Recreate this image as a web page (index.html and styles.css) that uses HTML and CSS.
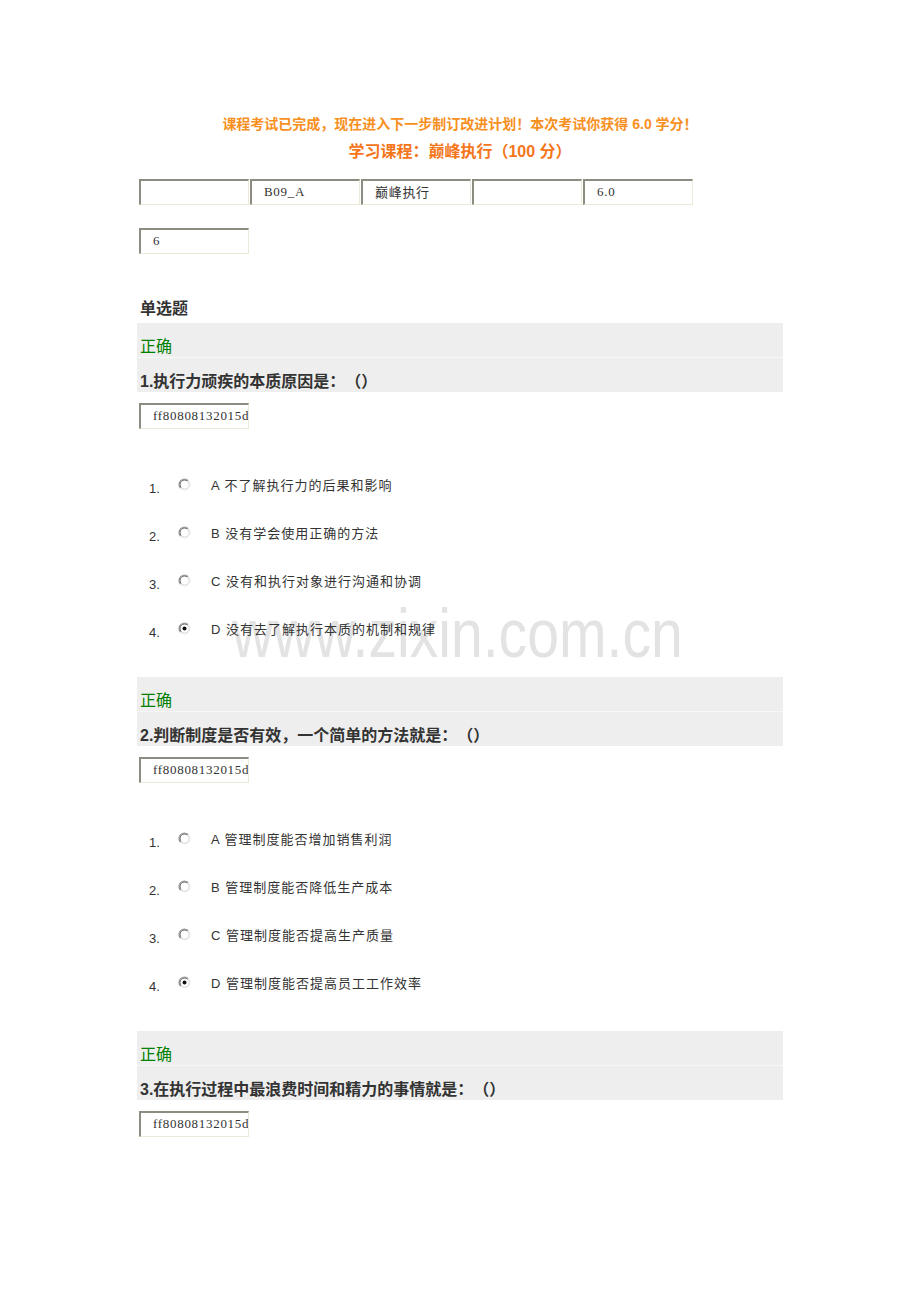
FILE: index.html
```html
<!DOCTYPE html>
<html lang="zh-CN">
<head>
<meta charset="utf-8">
<title>巅峰执行</title>
<link rel="stylesheet" href="styles.css">
</head>
<body>
<div class="page">
  <div class="watermark">www.zixin.com.cn</div>
  <div class="notice">课程考试已完成，现在进入下一步制订改进计划！本次考试你获得 6.0 学分！</div>
  <div class="course">学习课程：巅峰执行（100 分）</div>
  <div class="fields">
    <input class="field" type="text" value="" readonly>
    <input class="field" type="text" value="B09_A" readonly>
    <input class="field" type="text" value="巅峰执行" readonly>
    <input class="field" type="text" value="" readonly>
    <input class="field" type="text" value="6.0" readonly>
  </div>
  <div class="fields fields-2">
    <input class="field" type="text" value="6" readonly>
  </div>

  <div class="section-title">单选题</div>

  <div class="question">
    <div class="band">
      <div class="band-row status">正确</div>
      <div class="band-row qtext"><span class="qnum">1.</span>执行力顽疾的本质原因是：（）</div>
    </div>
    <div class="fields qfield"><input class="field" type="text" value="ff80808132015d" readonly></div>
    <ol class="options">
      <li class="option"><span class="num">1.</span><svg class="radio" viewBox="0 0 13 13"><path d="M2.6 10.4A5.5 5.5 0 0 1 10.4 2.6" fill="none" stroke="#9a9a9a" stroke-width="1.2"/><path d="M10.4 2.6A5.5 5.5 0 0 1 2.6 10.4" fill="none" stroke="#ececec" stroke-width="1.2"/><path d="M3.3 9.7A4.4 4.4 0 0 1 9.7 3.3" fill="none" stroke="#5a5a5a" stroke-width="1"/><path d="M9.7 3.3A4.4 4.4 0 0 1 3.3 9.7" fill="none" stroke="#dcdcdc" stroke-width="1"/></svg><span class="otext">A 不了解执行力的后果和影响</span></li>
      <li class="option"><span class="num">2.</span><svg class="radio" viewBox="0 0 13 13"><path d="M2.6 10.4A5.5 5.5 0 0 1 10.4 2.6" fill="none" stroke="#9a9a9a" stroke-width="1.2"/><path d="M10.4 2.6A5.5 5.5 0 0 1 2.6 10.4" fill="none" stroke="#ececec" stroke-width="1.2"/><path d="M3.3 9.7A4.4 4.4 0 0 1 9.7 3.3" fill="none" stroke="#5a5a5a" stroke-width="1"/><path d="M9.7 3.3A4.4 4.4 0 0 1 3.3 9.7" fill="none" stroke="#dcdcdc" stroke-width="1"/></svg><span class="otext">B 没有学会使用正确的方法</span></li>
      <li class="option"><span class="num">3.</span><svg class="radio" viewBox="0 0 13 13"><path d="M2.6 10.4A5.5 5.5 0 0 1 10.4 2.6" fill="none" stroke="#9a9a9a" stroke-width="1.2"/><path d="M10.4 2.6A5.5 5.5 0 0 1 2.6 10.4" fill="none" stroke="#ececec" stroke-width="1.2"/><path d="M3.3 9.7A4.4 4.4 0 0 1 9.7 3.3" fill="none" stroke="#5a5a5a" stroke-width="1"/><path d="M9.7 3.3A4.4 4.4 0 0 1 3.3 9.7" fill="none" stroke="#dcdcdc" stroke-width="1"/></svg><span class="otext">C 没有和执行对象进行沟通和协调</span></li>
      <li class="option"><span class="num">4.</span><svg class="radio" viewBox="0 0 13 13"><path d="M2.6 10.4A5.5 5.5 0 0 1 10.4 2.6" fill="none" stroke="#9a9a9a" stroke-width="1.2"/><path d="M10.4 2.6A5.5 5.5 0 0 1 2.6 10.4" fill="none" stroke="#ececec" stroke-width="1.2"/><path d="M3.3 9.7A4.4 4.4 0 0 1 9.7 3.3" fill="none" stroke="#5a5a5a" stroke-width="1"/><path d="M9.7 3.3A4.4 4.4 0 0 1 3.3 9.7" fill="none" stroke="#dcdcdc" stroke-width="1"/><circle cx="6.5" cy="6.5" r="2" fill="#111"/></svg><span class="otext">D 没有去了解执行本质的机制和规律</span></li>
    </ol>
  </div>

  <div class="question">
    <div class="band">
      <div class="band-row status">正确</div>
      <div class="band-row qtext"><span class="qnum">2.</span>判断制度是否有效，一个简单的方法就是：（）</div>
    </div>
    <div class="fields qfield"><input class="field" type="text" value="ff80808132015d" readonly></div>
    <ol class="options">
      <li class="option"><span class="num">1.</span><svg class="radio" viewBox="0 0 13 13"><path d="M2.6 10.4A5.5 5.5 0 0 1 10.4 2.6" fill="none" stroke="#9a9a9a" stroke-width="1.2"/><path d="M10.4 2.6A5.5 5.5 0 0 1 2.6 10.4" fill="none" stroke="#ececec" stroke-width="1.2"/><path d="M3.3 9.7A4.4 4.4 0 0 1 9.7 3.3" fill="none" stroke="#5a5a5a" stroke-width="1"/><path d="M9.7 3.3A4.4 4.4 0 0 1 3.3 9.7" fill="none" stroke="#dcdcdc" stroke-width="1"/></svg><span class="otext">A 管理制度能否增加销售利润</span></li>
      <li class="option"><span class="num">2.</span><svg class="radio" viewBox="0 0 13 13"><path d="M2.6 10.4A5.5 5.5 0 0 1 10.4 2.6" fill="none" stroke="#9a9a9a" stroke-width="1.2"/><path d="M10.4 2.6A5.5 5.5 0 0 1 2.6 10.4" fill="none" stroke="#ececec" stroke-width="1.2"/><path d="M3.3 9.7A4.4 4.4 0 0 1 9.7 3.3" fill="none" stroke="#5a5a5a" stroke-width="1"/><path d="M9.7 3.3A4.4 4.4 0 0 1 3.3 9.7" fill="none" stroke="#dcdcdc" stroke-width="1"/></svg><span class="otext">B 管理制度能否降低生产成本</span></li>
      <li class="option"><span class="num">3.</span><svg class="radio" viewBox="0 0 13 13"><path d="M2.6 10.4A5.5 5.5 0 0 1 10.4 2.6" fill="none" stroke="#9a9a9a" stroke-width="1.2"/><path d="M10.4 2.6A5.5 5.5 0 0 1 2.6 10.4" fill="none" stroke="#ececec" stroke-width="1.2"/><path d="M3.3 9.7A4.4 4.4 0 0 1 9.7 3.3" fill="none" stroke="#5a5a5a" stroke-width="1"/><path d="M9.7 3.3A4.4 4.4 0 0 1 3.3 9.7" fill="none" stroke="#dcdcdc" stroke-width="1"/></svg><span class="otext">C 管理制度能否提高生产质量</span></li>
      <li class="option"><span class="num">4.</span><svg class="radio" viewBox="0 0 13 13"><path d="M2.6 10.4A5.5 5.5 0 0 1 10.4 2.6" fill="none" stroke="#9a9a9a" stroke-width="1.2"/><path d="M10.4 2.6A5.5 5.5 0 0 1 2.6 10.4" fill="none" stroke="#ececec" stroke-width="1.2"/><path d="M3.3 9.7A4.4 4.4 0 0 1 9.7 3.3" fill="none" stroke="#5a5a5a" stroke-width="1"/><path d="M9.7 3.3A4.4 4.4 0 0 1 3.3 9.7" fill="none" stroke="#dcdcdc" stroke-width="1"/><circle cx="6.5" cy="6.5" r="2" fill="#111"/></svg><span class="otext">D 管理制度能否提高员工工作效率</span></li>
    </ol>
  </div>

  <div class="question">
    <div class="band">
      <div class="band-row status">正确</div>
      <div class="band-row qtext"><span class="qnum">3.</span>在执行过程中最浪费时间和精力的事情就是：（）</div>
    </div>
    <div class="fields qfield"><input class="field" type="text" value="ff80808132015d" readonly></div>
  </div>
</div>
</body>
</html>
```

FILE: styles.css
```css
html {
  margin: 0;
  padding: 0;
  background: #fff;
}

body {
  margin: 0;
  padding: 0;
  font-family: "Liberation Sans", "Noto Sans CJK SC", sans-serif;
  color: #333;
  text-spacing-trim: space-all;
}

.page {
  position: relative;
  width: 646px;
  margin: 0 auto;
  padding-top: 114px;
}

.watermark {
  position: absolute;
  left: 95px;
  top: 599px;
  z-index: -1;
  font-family: "Liberation Sans", sans-serif;
  font-size: 68px;
  line-height: 1;
  color: #e3e3e3;
  white-space: nowrap;
  transform: scaleX(0.84);
  transform-origin: left top;
  pointer-events: none;
}

.notice {
  text-align: center;
  font-size: 14px;
  font-weight: bold;
  line-height: 20px;
  color: #f7901e;
}

.course {
  margin-top: 6px;
  text-align: center;
  font-size: 16px;
  font-weight: bold;
  line-height: 24px;
  color: #f5761a;
}

.fields {
  display: flex;
  gap: 1px;
  margin-top: 15px;
  padding-left: 2px;
}

.fields-2 {
  margin-top: 23px;
}

.field {
  width: 110px;
  height: 26px;
  box-sizing: border-box;
  margin: 0;
  padding: 0 0 2px 12px;
  border-top: 2px solid #8c8c80;
  border-left: 2px solid #8c8c80;
  border-right: 1px solid #ece9d8;
  border-bottom: 1px solid #ece9d8;
  border-radius: 0;
  background: #fff;
  outline: none;
  font-family: "Liberation Serif", "Noto Sans CJK SC", serif;
  font-size: 13px;
  letter-spacing: 0.7px;
  color: #333;
}

.section-title {
  margin-top: 45px;
  margin-bottom: 4px;
  padding-left: 3px;
  font-size: 16px;
  font-weight: bold;
  line-height: 20px;
  color: #333;
}

.question + .question {
  margin-top: 37px;
}

.band {
  background: #eeeeee;
}

.band-row {
  height: 34px;
  box-sizing: border-box;
  padding: 14px 0 0 3px;
  line-height: 20px;
  font-size: 16px;
  white-space: nowrap;
}

.band-row + .band-row {
  height: 35px;
  border-top: 1px solid #f7f7f7;
}

.status {
  color: #008000;
}

.qtext {
  color: #333;
  font-weight: bold;
}

.qfield {
  margin-top: 11px;
}

.options {
  list-style: none;
  margin: 47px 0 0;
  padding: 0;
  display: flex;
  flex-direction: column;
  gap: 28px;
}

.option {
  display: flex;
  align-items: flex-start;
  height: 20px;
  line-height: 20px;
  font-size: 13px;
  color: #333;
}

.num {
  width: 41px;
  box-sizing: border-box;
  padding: 3px 0 0 12px;
  flex: none;
}

.radio {
  width: 13px;
  height: 13px;
  margin-top: 2px;
  flex: none;
}

.otext {
  margin-left: 20px;
  letter-spacing: 1px;
  white-space: nowrap;
}
```
